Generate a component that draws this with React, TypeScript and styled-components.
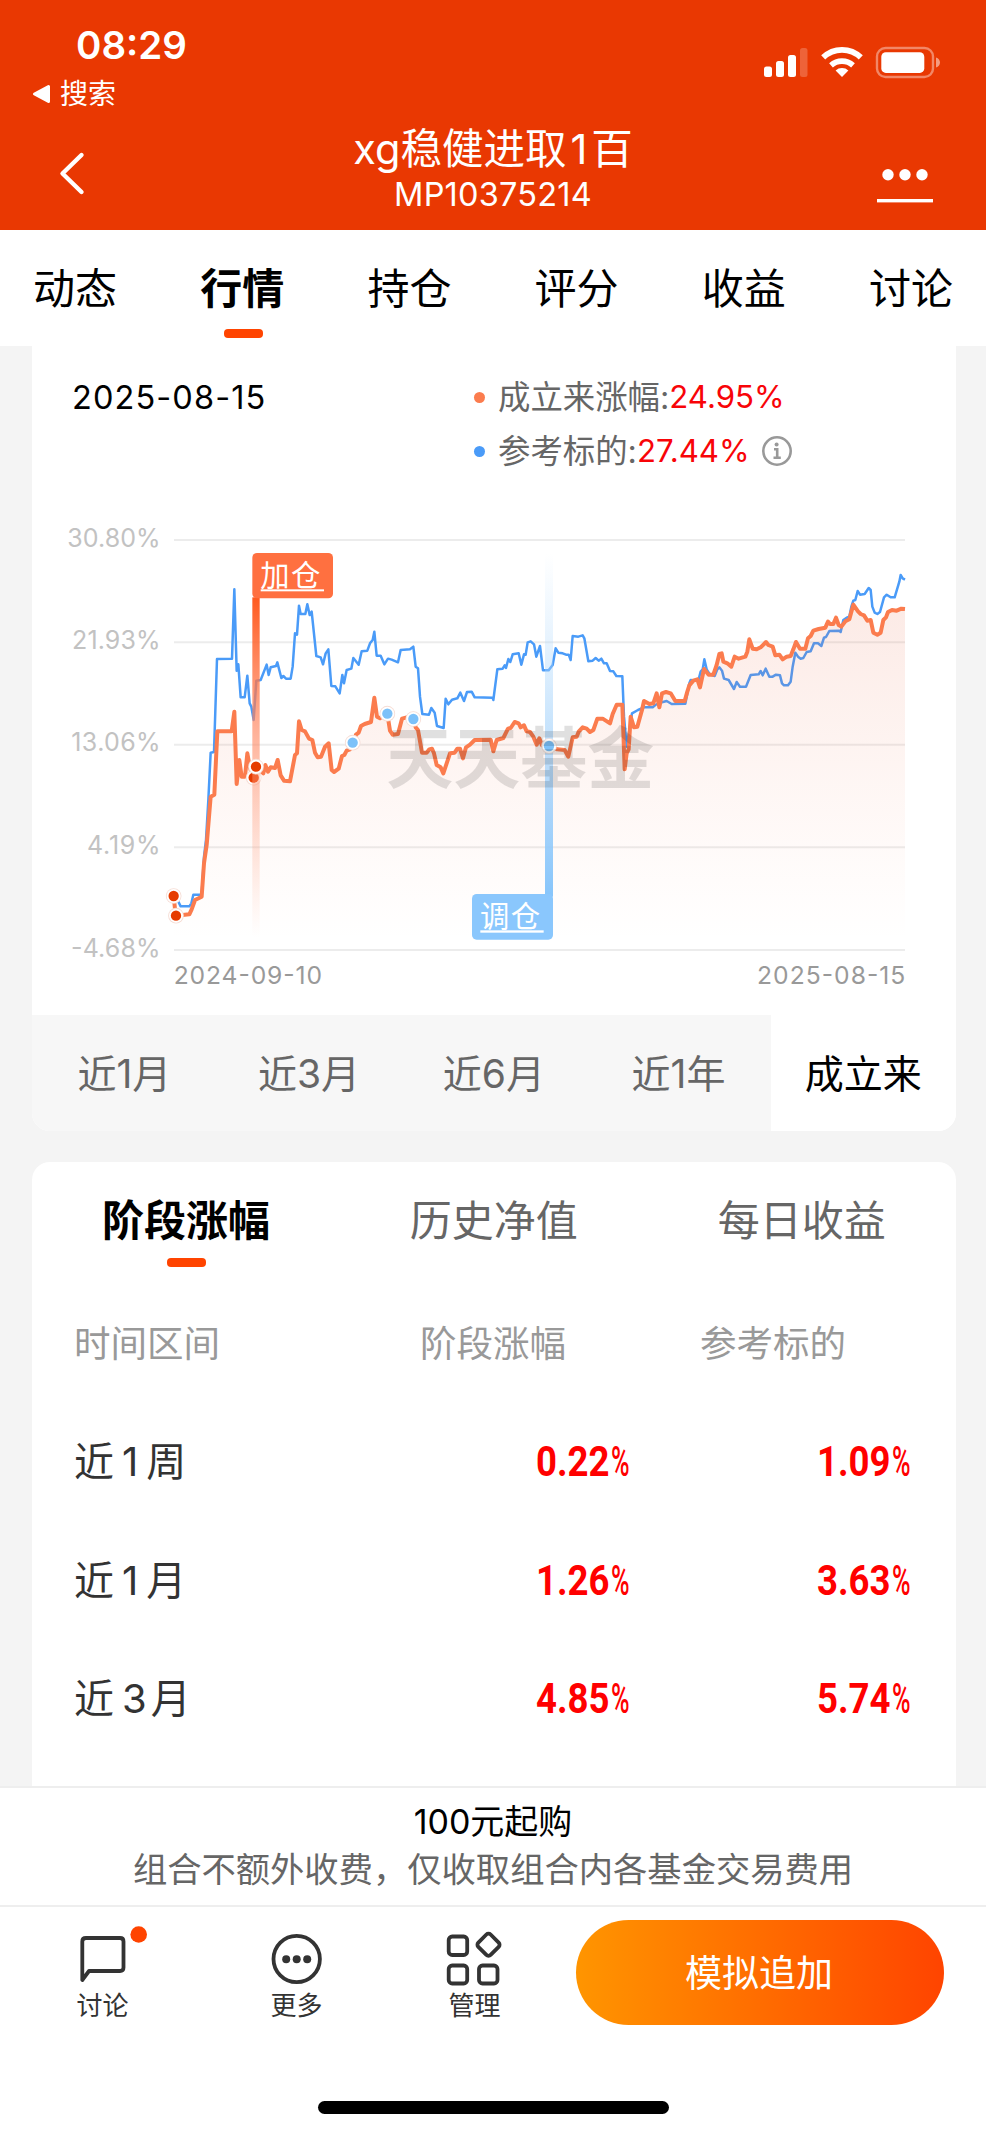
import React from 'react';
import styled, { createGlobalStyle } from 'styled-components';

const GlobalStyle = createGlobalStyle`
  * { box-sizing: border-box; }
  body {
    margin: 0;
    background: #f4f4f4;
    font-family: Inter, 'Noto Sans CJK SC', sans-serif;
    color: #000;
  }
`;

const Screen = styled.div`
  width: 986px;
  height: 2134px;
  display: flex;
  flex-direction: column;
  overflow: hidden;
  background: #f4f4f4;
`;

/* ---------- header ---------- */

const Header = styled.header`
  height: 230px;
  flex: none;
  background: #e93802;
  color: #fff;
`;

const StatusBar = styled.div`
  height: 116px;
  display: flex;
  justify-content: space-between;
  padding: 23px 45px 0 32px;
`;

const StatusLeft = styled.div`
  display: flex;
  flex-direction: column;
`;

const Clock = styled.div`
  padding-left: 44px;
  font-size: 38.5px;
  line-height: 44px;
  font-weight: 600;
`;

const ReturnLink = styled.div`
  margin-top: 7px;
  display: flex;
  align-items: center;
  gap: 9px;
  font-size: 28px;
  line-height: 40px;
`;

const StatusIcons = styled.svg`
  margin-top: 17px;
  width: 180px;
  height: 44px;
`;

const TitleBar = styled.div`
  height: 114px;
  display: grid;
  grid-template-columns: 120px 1fr 120px;
`;

const BackIcon = styled.svg`
  width: 30px;
  height: 50px;
  margin: 33px 0 0 57px;
`;

const Titles = styled.div`
  text-align: center;
  padding-top: 8px;
`;

const Title = styled.h1`
  margin: 0;
  font-size: 41.5px;
  line-height: 50px;
  font-weight: 400;
`;

const TitleNumber = styled.span`
  margin: 0 4px;
`;

const Subtitle = styled.div`
  font-size: 32.5px;
  line-height: 42px;
  letter-spacing: 0.2px;
`;

const MoreIcon = styled.svg`
  width: 60px;
  height: 40px;
  margin: 50px 0 0 9px;
`;

/* ---------- section tabs ---------- */

const SectionTabs = styled.nav`
  height: 116px;
  flex: none;
  background: #fff;
  display: flex;
  justify-content: space-between;
  padding: 0 33px 0 33px;
`;

const SectionTab = styled.div<{ $active?: boolean }>`
  display: flex;
  flex-direction: column;
  align-items: center;
  font-size: 42px;
  line-height: 60px;
  padding-top: 29px;
  font-weight: ${(p) => (p.$active ? 700 : 400)};
`;

const Indicator = styled.span<{ $gap: number }>`
  width: 39px;
  height: 9px;
  margin: ${(p) => p.$gap}px 0 0 2px;
  border-radius: 4px;
  background: #ff4400;
`;

/* ---------- chart card ---------- */

const Content = styled.main`
  flex: 1;
  min-height: 0;
  overflow: hidden;
  display: flex;
  flex-direction: column;
  gap: 31px;
  padding: 0 30.4px 0 32px;
`;

const ChartCard = styled.section`
  flex: none;
  height: 785px;
  display: flex;
  flex-direction: column;
  background: #fff;
  border-radius: 0 0 18px 18px;
  overflow: hidden;
`;

const Summary = styled.div`
  height: 164px;
  display: flex;
  padding: 24px 0 0 40px;
`;

const DateText = styled.div`
  width: 402px;
  font-size: 32.5px;
  line-height: 56px;
  letter-spacing: 1.1px;
`;

const Legend = styled.div`
  display: flex;
  flex-direction: column;
`;

const LegendRow = styled.div`
  display: flex;
  align-items: center;
  height: 54px;
  font-size: 32.4px;
  color: #666;
`;

const LegendDot = styled.span<{ $color: string }>`
  width: 11px;
  height: 11px;
  margin-right: 13px;
  border-radius: 50%;
  background: ${(p) => p.$color};
`;

const LegendLabel = styled.span`
  padding-bottom: 5px;
`;

const LegendValue = styled.span`
  font-size: 31.2px;
  color: #f80408;
`;

const InfoIcon = styled.svg`
  width: 32px;
  height: 32px;
  margin-left: 11px;
`;

const ChartSvg = styled.svg`
  display: block;
  flex: none;
  width: 922px;
  height: 505px;
`;

const PeriodTabs = styled.div`
  flex: 1;
  display: grid;
  grid-template-columns: repeat(5, 1fr);
`;

const PeriodTab = styled.div<{ $active?: boolean }>`
  display: flex;
  align-items: center;
  justify-content: center;
  padding-bottom: 5px;
  font-size: 39px;
  background: ${(p) => (p.$active ? '#fff' : '#f7f7f7')};
  color: ${(p) => (p.$active ? '#000' : '#666')};
`;

/* ---------- performance card ---------- */

const StatsCard = styled.section`
  flex: 1;
  background: #fff;
  border-radius: 18px 18px 0 0;
`;

const StatsTabs = styled.div`
  height: 122px;
  display: grid;
  grid-template-columns: repeat(3, 1fr);
`;

const StatsTab = styled.div<{ $active?: boolean }>`
  display: flex;
  flex-direction: column;
  align-items: center;
  padding-top: 29px;
  font-size: 42px;
  line-height: 60px;
  font-weight: ${(p) => (p.$active ? 700 : 400)};
  color: ${(p) => (p.$active ? '#000' : '#666')};
`;

const TableRow = styled.div`
  height: 118.5px;
  display: grid;
  grid-template-columns: 300px 300px 281px;
  align-items: center;
  padding-left: 42px;
`;

const HeadCell = styled.div<{ $indent?: number }>`
  padding: 0 0 4px ${(p) => p.$indent ?? 0}px;
  font-size: 36.5px;
  color: #999;
`;

const PeriodLabel = styled.div`
  display: flex;
  align-items: baseline;
  padding-bottom: 5px;
  font-size: 40px;
  color: #333;
`;

const PeriodNumber = styled.span<{ $wide: boolean }>`
  margin: ${(p) => (p.$wide ? '0 4px 0 8px' : '0 8px 0 8px')};
`;

const Percent = styled.div`
  display: flex;
  justify-content: flex-end;
  padding-right: 43px;
  font-family: Roboto, sans-serif;
  font-size: 42px;
  color: #ff0000;
`;

const PercentDigits = styled.span`
  font-weight: 700;
  transform: scaleX(0.87);
  transform-origin: right center;
`;

const PercentSign = styled.span`
  width: 20px;
  margin-left: 1.5px;
  font-weight: 500;
  transform: scaleX(0.6);
  transform-origin: left center;
`;

/* ---------- footer ---------- */

const Footer = styled.footer`
  flex: none;
  height: 348px;
  background: #fff;
  border-top: 2px solid #eee;
  display: flex;
  flex-direction: column;
`;

const Notice = styled.div`
  height: 119px;
  border-bottom: 2px solid #eee;
  text-align: center;
  padding-top: 10px;
`;

const NoticeTitle = styled.div`
  font-size: 34px;
  line-height: 48px;
`;

const NoticeText = styled.div`
  font-size: 34.3px;
  line-height: 48px;
  color: #666;
`;

const ActionBar = styled.div`
  display: flex;
  height: 194px;
  padding: 13px 42px 0 53px;
`;

const Action = styled.div<{ $width: number }>`
  width: ${(p) => p.$width}px;
  display: flex;
  flex-direction: column;
  font-size: 26px;
  line-height: 36px;
  color: #333;
`;

const ActionIcon = styled.svg`
  width: 100px;
  height: 68px;
`;

const ActionLabel = styled.span`
  width: 99px;
  text-align: center;
`;

const PrimaryButton = styled.button`
  width: 368px;
  height: 105px;
  border: 0;
  border-radius: 53px;
  background: linear-gradient(90deg, #ff9500, #ff4400);
  color: #fff;
  font: inherit;
  font-size: 37px;
  padding: 0 2px 4px 0;
`;

const HomeIndicator = styled.div`
  width: 351px;
  height: 12.5px;
  margin: 0 auto;
  border-radius: 7px;
  background: #000;
`;

/* ---------- chart data ---------- */

type Segment = [number, string];

const benchmark: Segment[] = [
  [0, '371,1158 385,1175 392,1189 418,1189 424,1180 430,1154 455,1154 462,1040 468,990 475,870 482,728 492,726 501,447 546,446 553,238 560,482 565,463 572,562 584,562 592,497 599,580 604,590 611,630 619,512 632,510 650,464 656,495 662,472 678,468 682,457 694,504 700,498 708,506 722,506 728,470 735,370 741,374 747,287 752,312 766,312 772,283 779,315 785,305 799,438 812,442 819,463 827,430 835,418 844,528 856,529 869,550 877,495 882,520 890,480 904,476 910,444 926,464'],
  [930, '5,424 22,422 30,400 38,390 43,365 50,437 62,437 73,463 84,446 95,449 114,457 122,420 150,418 160,410 167,470 174,475 180,560 187,612 207,614 214,594 224,608 231,648 251,654 257,566 265,583 276,569 292,565 301,548 312,573 321,546 335,545 344,562 398,563 400,570 412,478 428,476 434,466 438,474 445,447 451,456 458,433 476,430 484,464 492,433 497,434 503,397 512,394 522,403 529,440 540,408 549,481 566,481 578,465 587,415 595,428 608,430 618,434 626,434 632,450 638,378 655,380 668,376 673,385 685,454 698,452 707,444 716,452 724,446 732,460 740,460 750,483 760,484 769,498 787,499 792,620 800,710 808,660 816,610 834,600'],
  [1770, '12,592 38,592 46,585 60,578 80,573 95,582 136,581 148,520 152,510 175,512 182,485 188,478 193,448 200,478 210,494 224,498 232,478 238,472 246,482 252,506 266,510 282,537 290,516 300,530 318,530 332,495 356,493 362,483 368,496 377,476 388,500 398,500 408,494 420,496 426,520 432,526 444,526 452,515 458,470 466,428 474,440 482,446 490,444 500,426 512,424 522,400 534,400 544,408 552,383 558,381 568,363 598,362 602,366 610,330 620,323 628,320 634,290 640,272 646,270 653,243 660,254 674,252 686,234 692,240 697,290 704,308 712,312 720,306 732,262 740,254 752,262 764,262 772,235 778,215 782,195 788,205 795,209'],
];

const portfolio: Segment[] = [
  [0, '371,1158 377,1217 418,1213 425,1198 435,1170 455,1160 462,1060 470,1005 482,860 493,854 502,664 545,664 553,605 560,822 568,750 575,800 585,800 592,730 600,775 611,803 618,770 640,790 646,765 654,785 662,772 675,774 683,750 692,796 702,812 720,814 735,735 741,730 747,634 755,660 765,664 777,686 787,690 795,728 803,742 813,740 825,710 836,700 845,780 852,786 866,776 876,738 883,735 890,722 900,718 908,698 918,674 926,668'],
  [930, '3,648 14,642 33,636 43,563 51,620 60,625 75,612 82,612 90,662 98,674 114,672 126,626 140,622 160,627 167,652 174,660 186,728 200,728 208,718 216,716 222,730 230,765 242,772 250,790 260,760 270,730 284,728 292,716 300,716 309,745 318,712 330,704 344,690 392,689 400,724 410,690 430,684 444,656 452,654 464,636 476,640 482,652 492,646 500,664 510,666 520,680 530,704 538,685 546,706 567,708 592,718 614,720 625,740 638,682 650,680 656,665 668,652 680,656 690,666 700,660 712,626 728,626 750,640 758,612 770,584 787,584 794,778 800,730 806,718 812,620 822,652 832,650 846,600 852,573 868,582 880,580 890,550 898,592'],
  [1770, '66,550 78,546 92,550 106,573 134,573 142,545 148,526 160,512 172,508 180,532 192,477 206,494 220,494 230,465 238,432 245,430 250,455 262,460 274,470 284,440 296,446 316,440 322,425 328,388 338,416 350,418 362,412 378,396 385,405 398,410 406,436 418,434 428,448 440,440 452,438 460,418 468,396 480,416 496,416 504,385 512,378 520,362 536,357 556,353 564,335 570,342 580,342 588,323 596,345 604,350 616,334 628,328 640,284 654,304 662,312 672,316 682,332 692,330 700,368 712,374 722,368 730,330 738,322 744,306 756,300 770,302 784,296 795,297'],
];

const toPath = (segments: Segment[]) =>
  'M' +
  segments
    .flatMap(([offset, points]) =>
      points.split(' ').map((pair) => {
        const [x, y] = pair.split(',').map(Number);
        return `${x + offset} ${y}`;
      }),
    )
    .join('L');

const gridLines = [
  { y: 90, label: '30.80%', width: 280 },
  { y: 397, label: '21.93%', width: 266 },
  { y: 704, label: '13.06%', width: 268 },
  { y: 1012, label: '4.19%', width: 221 },
  { y: 1320, label: '-4.68%', width: 269 },
];

const Dot = ({ x, y, color }: { x: number; y: number; color: string }) => (
  <g>
    <circle cx={x} cy={y} r="23.5" fill="#f6ddd5" />
    <circle cx={x} cy={y} r="21" fill="#fff" />
    <circle cx={x} cy={y} r="15.5" fill={color} />
  </g>
);

function TrendChart() {
  const portfolioPath = toPath(portfolio);
  return (
    <ChartSvg viewBox="-54 0 2766 1515">
      <defs>
        <linearGradient id="area" gradientUnits="userSpaceOnUse" x1="0" y1="280" x2="0" y2="1290">
          <stop offset="0" stopColor="#e8603c" stopOpacity="0.13" />
          <stop offset="0.4" stopColor="#ee6a45" stopOpacity="0.08" />
          <stop offset="1" stopColor="#ff8a5c" stopOpacity="0" />
        </linearGradient>
        <linearGradient id="buyPole" x1="0" y1="0" x2="0" y2="1">
          <stop offset="0" stopColor="#ff5a1f" />
          <stop offset="0.35" stopColor="#ff8058" stopOpacity="0.68" />
          <stop offset="1" stopColor="#ffb39a" stopOpacity="0" />
        </linearGradient>
        <linearGradient id="adjustPole" x1="0" y1="0" x2="0" y2="1">
          <stop offset="0" stopColor="#b9ddfd" stopOpacity="0" />
          <stop offset="0.5" stopColor="#a3d2fb" stopOpacity="0.6" />
          <stop offset="1" stopColor="#86c5fb" />
        </linearGradient>
      </defs>

      {gridLines.map((line) => (
        <g key={line.label}>
          <line x1="372" x2="2565" y1={line.y} y2={line.y} stroke="#ececec" strokeWidth="6" />
          <text
            x={332 - line.width}
            y={line.y + 20}
            fontSize="75"
            fill="#c2c2c2"
            textLength={line.width}
          >
            {line.label}
          </text>
        </g>
      ))}
      <text x="371" y="1423" fontSize="74" fill="#999" textLength="445">
        2024-09-10
      </text>
      <text x="2121" y="1423" fontSize="74" fill="#999" textLength="445">
        2025-08-15
      </text>

      <path d={toPath(benchmark)} fill="none" stroke="#4a9bf8" strokeWidth="7.5" strokeLinejoin="round" />
      <path d={`${portfolioPath}L2565 1320L371 1320Z`} fill="url(#area)" />
      <path d={portfolioPath} fill="none" stroke="#fb7c4e" strokeWidth="12" strokeLinejoin="round" />

      <Dot x={611} y={803} color="#e63c00" />
      <rect x="607" y="262" width="22" height="1020" fill="url(#buyPole)" />
      <rect x="607" y="129" width="242" height="136" rx="14" fill="#ff7040" />
      <text x="631" y="228" fontSize="88" fill="#fff" letterSpacing="4">
        加仓
      </text>
      <rect x="632" y="238" width="190" height="6" fill="#fff" />

      <rect x="1485" y="130" width="24" height="1030" fill="url(#adjustPole)" />
      <rect x="1266" y="1152" width="243" height="137" rx="14" fill="#8ac7fd" />
      <text x="1290" y="1251" fontSize="88" fill="#fff" letterSpacing="4">
        调仓
      </text>
      <rect x="1291" y="1261" width="190" height="7" fill="#fff" />

      <Dot x={371} y={1158} color="#e63c00" />
      <Dot x={378} y={1217} color="#e63c00" />
      <Dot x={618} y={770} color="#e63c00" />
      <Dot x={908} y={698} color="#7cc1f9" />
      <Dot x={1012} y={611} color="#7cc1f9" />
      <Dot x={1090} y={627} color="#7cc1f9" />
      <Dot x={1497} y={708} color="#7cc1f9" />

      <text x="1009" y="820" fontSize="201" fontWeight="700" fill="#000" fillOpacity="0.12">
        天天基金
      </text>
    </ChartSvg>
  );
}

const sections = ['动态', '行情', '持仓', '评分', '收益', '讨论'];
const periods = ['近1月', '近3月', '近6月', '近1年', '成立来'];
const statTabs = ['阶段涨幅', '历史净值', '每日收益'];
const rows = [
  { num: '1', unit: '周', own: '0.22', ref: '1.09' },
  { num: '1', unit: '月', own: '1.26', ref: '3.63' },
  { num: '3', unit: '月', own: '4.85', ref: '5.74' },
];

const PercentCell = ({ value }: { value: string }) => (
  <Percent>
    <PercentDigits>{value}</PercentDigits>
    <PercentSign>%</PercentSign>
  </Percent>
);

export default function App() {
  return (
    <>
      <GlobalStyle />
      <Screen>
        <Header>
          <StatusBar>
            <StatusLeft>
              <Clock>08:29</Clock>
              <ReturnLink>
                <svg width="19" height="20" viewBox="0 0 19 20">
                  <path d="M2.5 10L16.5 2.5V17.5Z" fill="#fff" stroke="#fff" strokeWidth="3" strokeLinejoin="round" />
                </svg>
                搜索
              </ReturnLink>
            </StatusLeft>
            <StatusIcons viewBox="761 40 180 44">
              <g fill="#fff">
                <rect x="764" y="66.5" width="8" height="10.5" rx="2.5" />
                <rect x="776" y="61" width="8" height="16" rx="2.5" />
                <rect x="788" y="55" width="8" height="22" rx="2.5" />
                <rect x="800" y="48" width="7.5" height="29" rx="2.5" opacity="0.22" />
                <path d="M842 77L835.6 70.6A9.5 9.5 0 0 1 848.4 70.6Z" />
              </g>
              <path d="M831 65.3A16.5 16.5 0 0 1 853 65.3" fill="none" stroke="#fff" strokeWidth="5.6" />
              <path d="M823.2 57.4A27 27 0 0 1 860.8 57.4" fill="none" stroke="#fff" strokeWidth="5.8" />
              <rect x="877" y="48" width="56" height="29" rx="8.5" fill="none" stroke="#fff" strokeOpacity="0.4" strokeWidth="2.4" />
              <rect x="881.3" y="52.3" width="43" height="20.6" rx="4.5" fill="#fff" />
              <path d="M936 57.5C941.3 59 941.3 66 936 67.5Z" fill="#fff" fillOpacity="0.5" />
            </StatusIcons>
          </StatusBar>
          <TitleBar>
            <BackIcon viewBox="0 0 30 50">
              <path d="M24.5 6L5.5 24.5L24.5 43" fill="none" stroke="#fff" strokeWidth="4.4" strokeLinecap="round" strokeLinejoin="round" />
            </BackIcon>
            <Titles>
              <Title>
                xg稳健进取<TitleNumber>1</TitleNumber>百
              </Title>
              <Subtitle>MP10375214</Subtitle>
            </Titles>
            <MoreIcon viewBox="0 0 60 40">
              <g fill="#fff">
                <circle cx="13" cy="8.7" r="5.7" />
                <circle cx="30" cy="8.7" r="5.7" />
                <circle cx="47" cy="8.7" r="5.7" />
                <rect x="2" y="33" width="56" height="3.4" />
              </g>
            </MoreIcon>
          </TitleBar>
        </Header>

        <SectionTabs>
          {sections.map((name) => (
            <SectionTab key={name} $active={name === '行情'}>
              {name}
              {name === '行情' && <Indicator $gap={10} />}
            </SectionTab>
          ))}
        </SectionTabs>

        <Content>
          <ChartCard>
            <Summary>
              <DateText>2025-08-15</DateText>
              <Legend>
                <LegendRow>
                  <LegendDot $color="#fb7c4e" />
                  <LegendLabel>成立来涨幅:</LegendLabel>
                  <LegendValue>24.95%</LegendValue>
                </LegendRow>
                <LegendRow>
                  <LegendDot $color="#4a9bf8" />
                  <LegendLabel>参考标的:</LegendLabel>
                  <LegendValue>27.44%</LegendValue>
                  <InfoIcon viewBox="0 0 32 32">
                    <circle cx="16" cy="16" r="13.7" fill="none" stroke="#999" strokeWidth="2.6" />
                    <circle cx="15.6" cy="9.6" r="2" fill="#999" />
                    <path d="M13 14.2H16.2V22.6M12.5 22.8H19.8" fill="none" stroke="#999" strokeWidth="2.6" />
                  </InfoIcon>
                </LegendRow>
              </Legend>
            </Summary>
            <TrendChart />
            <PeriodTabs>
              {periods.map((name) => (
                <PeriodTab key={name} $active={name === '成立来'}>
                  {name}
                </PeriodTab>
              ))}
            </PeriodTabs>
          </ChartCard>

          <StatsCard>
            <StatsTabs>
              {statTabs.map((name) => (
                <StatsTab key={name} $active={name === '阶段涨幅'}>
                  {name}
                  {name === '阶段涨幅' && <Indicator $gap={7} />}
                </StatsTab>
              ))}
            </StatsTabs>
            <TableRow>
              <HeadCell>时间区间</HeadCell>
              <HeadCell $indent={46}>阶段涨幅</HeadCell>
              <HeadCell $indent={26}>参考标的</HeadCell>
            </TableRow>
            {rows.map((row) => (
              <TableRow key={row.own}>
                <PeriodLabel>
                  近<PeriodNumber $wide={row.num !== '1'}>{row.num}</PeriodNumber>
                  {row.unit}
                </PeriodLabel>
                <PercentCell value={row.own} />
                <PercentCell value={row.ref} />
              </TableRow>
            ))}
          </StatsCard>
        </Content>

        <Footer>
          <Notice>
            <NoticeTitle>100元起购</NoticeTitle>
            <NoticeText>组合不额外收费，仅收取组合内各基金交易费用</NoticeText>
          </Notice>
          <ActionBar>
            <Action $width={194}>
              <ActionIcon viewBox="53 1920 100 68">
                <path
                  d="M86 1938H120Q123.5 1938 123.5 1941.5V1967.5Q123.5 1971 120 1971H89L82.3 1980V1941.5Q82.3 1938 86 1938Z"
                  fill="none"
                  stroke="#333"
                  strokeWidth="3.8"
                  strokeLinejoin="round"
                />
                <circle cx="138.7" cy="1934.5" r="8.3" fill="#ff4400" />
              </ActionIcon>
              <ActionLabel>讨论</ActionLabel>
            </Action>
            <Action $width={178}>
              <ActionIcon viewBox="247 1920 100 68">
                <circle cx="296.7" cy="1959" r="23.2" fill="none" stroke="#333" strokeWidth="3.8" />
                <circle cx="286.2" cy="1959.3" r="4" fill="#333" />
                <circle cx="296.7" cy="1959.3" r="4" fill="#333" />
                <circle cx="307.2" cy="1959.3" r="4" fill="#333" />
              </ActionIcon>
              <ActionLabel>更多</ActionLabel>
            </Action>
            <Action $width={151}>
              <ActionIcon viewBox="425 1920 100 68">
                <g fill="none" stroke="#333" strokeWidth="3.8">
                  <rect x="448.7" y="1936.5" width="18.5" height="18.5" rx="3.5" />
                  <rect x="448.7" y="1965.5" width="18.5" height="18" rx="3.5" />
                  <rect x="479" y="1965.5" width="18.5" height="18" rx="3.5" />
                  <rect x="479.8" y="1936" width="17.4" height="17.4" rx="3" transform="rotate(45 488.5 1944.7)" />
                </g>
              </ActionIcon>
              <ActionLabel>管理</ActionLabel>
            </Action>
            <PrimaryButton>模拟追加</PrimaryButton>
          </ActionBar>
          <HomeIndicator />
        </Footer>
      </Screen>
    </>
  );
}
